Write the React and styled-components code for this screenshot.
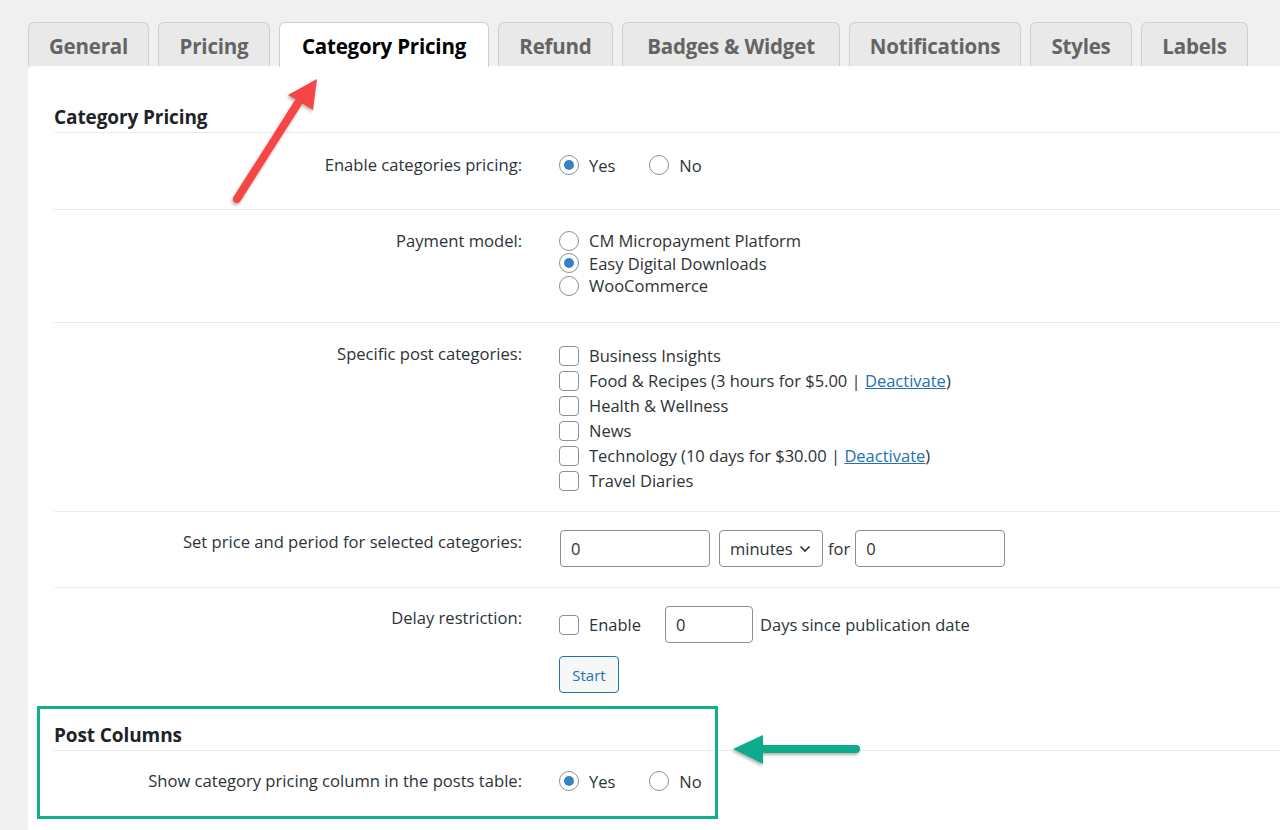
import React from 'react';
import styled, { createGlobalStyle } from 'styled-components';

const GlobalStyle = createGlobalStyle`
  body {
    margin: 0;
    background: #f0f0f1;
    font-family: "Open Sans", "Noto Sans", sans-serif;
    color: #3c434a;
    overflow: hidden;
  }
`;

const Page = styled.div`
  position: relative;
  box-sizing: border-box;
  padding: 22px 0 0 28px;
  height: 830px;
  overflow: hidden;
  display: flex;
  flex-direction: column;
`;

const TabBar = styled.div`
  display: flex;
  gap: 9px;
`;

const Tab = styled.div`
  width: ${(p) => p.$w}px;
  height: 44px;
  box-sizing: border-box;
  display: flex;
  align-items: center;
  justify-content: center;
  border: 1px solid #cfcfcf;
  border-bottom: none;
  border-radius: 6px 6px 0 0;
  background: ${(p) => (p.$active ? '#fff' : '#e9e9e9')};
  color: ${(p) => (p.$active ? '#000' : '#646464')};
  font-weight: 700;
  font-size: 20.5px;
  letter-spacing: -0.2px;
  padding-top: 2px;
  ${(p) => p.$active && 'margin-bottom: -1px; height: 45px; position: relative; z-index: 1;'}
`;

const Panel = styled.div`
  flex: 1;
  background: #fff;
  border-radius: 6px 0 0 0;
  padding: 39px 0 0 26px;
`;

const Heading = styled.h2`
  margin: 0;
  font-size: 19px;
  font-weight: 700;
  color: #1d2327;
  line-height: 24px;
  padding-bottom: 3px;
  border-bottom: 1px solid #ececec;
  letter-spacing: -0.1px;
`;

const Row = styled.div`
  display: grid;
  grid-template-columns: 468px 1fr;
  column-gap: 37px;
  padding: ${(p) => p.$pt ?? 20}px 0 ${(p) => p.$pb ?? 20}px;
  border-bottom: ${(p) => (p.$last ? 'none' : '1px solid #ececec')};
`;

const Label = styled.div`
  text-align: right;
  font-size: 16.6px;
  line-height: 22px;
  color: #2c3338;
  padding-top: ${(p) => p.$pt ?? 0}px;
`;

const Inline = styled.div`
  display: flex;
  align-items: center;
  gap: ${(p) => p.$gap ?? 0}px;
  font-size: 16.5px;
  color: #2c3338;
  min-height: ${(p) => p.$h ?? 22}px;
`;

const Stack = styled.div`
  display: flex;
  flex-direction: column;
`;

const Option = styled.label`
  display: flex;
  align-items: center;
  gap: 10px;
  height: ${(p) => p.$h ?? 22.5}px;
  font-size: 16.5px;
  color: #2c3338;
  margin-right: ${(p) => p.$mr ?? 0}px;
  white-space: nowrap;
`;

const Radio = styled.span`
  width: 20px;
  height: 20px;
  box-sizing: border-box;
  border-radius: 50%;
  border: 1px solid #8c8f94;
  display: inline-flex;
  align-items: center;
  justify-content: center;
  flex-shrink: 0;
  &::after {
    content: '';
    width: 10px;
    height: 10px;
    border-radius: 50%;
    background: ${(p) => (p.$on ? '#3582c4' : 'transparent')};
  }
`;

const Check = styled.span`
  width: 20px;
  height: 20px;
  box-sizing: border-box;
  border-radius: 4px;
  border: 1px solid #8c8f94;
  flex-shrink: 0;
`;

const Link = styled.a`
  color: #2271b1;
  text-decoration: underline;
`;

const Field = styled.div`
  width: ${(p) => p.$w}px;
  height: 37px;
  box-sizing: border-box;
  border: 1px solid #8c8f94;
  border-radius: 4px;
  padding: 0 10px;
  display: flex;
  align-items: center;
  justify-content: space-between;
  font-size: 16.5px;
  color: #2c3338;
  background: #fff;
  flex-shrink: 0;
`;

const Button = styled.div`
  width: 60px;
  height: 37px;
  box-sizing: border-box;
  border: 1px solid #2271b1;
  border-radius: 4px;
  background: #f6f7f7;
  color: #2271b1;
  font-size: 15px;
  display: flex;
  align-items: center;
  justify-content: center;
  margin-top: 13px;
`;

const Section = styled.div`
  margin-top: ${(p) => p.$mt ?? 0}px;
`;

const Overlay = styled.svg`
  position: absolute;
  left: 0;
  top: 0;
  pointer-events: none;
`;

const Chevron = () => (
  <svg width="14" height="14" viewBox="0 0 14 14">
    <path d="M2.5 4.5 L7 9 L11.5 4.5" fill="none" stroke="#2c3338" strokeWidth="1.7" />
  </svg>
);

const tabs = [
  ['General', 121],
  ['Pricing', 112],
  ['Category Pricing', 210, true],
  ['Refund', 115],
  ['Badges & Widget', 218],
  ['Notifications', 172],
  ['Styles', 102],
  ['Labels', 107],
];

const YesNo = () => (
  <Inline>
    <Option $mr={34}>
      <Radio $on /> Yes
    </Option>
    <Option>
      <Radio /> No
    </Option>
  </Inline>
);

const App = () => (
  <>
    <GlobalStyle />
    <Page>
      <TabBar>
        {tabs.map(([name, w, active]) => (
          <Tab key={name} $w={w} $active={active}>
            {name}
          </Tab>
        ))}
      </TabBar>
      <Panel>
        <Section>
          <Heading>Category Pricing</Heading>
          <Row $pt={21} $pb={32}>
            <Label>Enable categories pricing:</Label>
            <YesNo />
          </Row>
          <Row $pt={20} $pb={25}>
            <Label>Payment model:</Label>
            <Stack>
              <Option>
                <Radio /> CM Micropayment Platform
              </Option>
              <Option>
                <Radio $on /> Easy Digital Downloads
              </Option>
              <Option>
                <Radio /> WooCommerce
              </Option>
            </Stack>
          </Row>
          <Row $pt={20} $pb={18}>
            <Label>Specific post categories:</Label>
            <Stack>
              <Option $h={25}>
                <Check /> Business Insights
              </Option>
              <Option $h={25}>
                <Check />
                <span>
                  Food &amp; Recipes (3 hours for $5.00 | <Link>Deactivate</Link>)
                </span>
              </Option>
              <Option $h={25}>
                <Check /> Health &amp; Wellness
              </Option>
              <Option $h={25}>
                <Check /> News
              </Option>
              <Option $h={25}>
                <Check />
                <span>
                  Technology (10 days for $30.00 | <Link>Deactivate</Link>)
                </span>
              </Option>
              <Option $h={25}>
                <Check /> Travel Diaries
              </Option>
            </Stack>
          </Row>
          <Row $pt={18} $pb={20}>
            <Label $pt={1}>Set price and period for selected categories:</Label>
            <Inline $gap={5} style={{ marginLeft: 1 }}>
              <Field $w={150}>0</Field>
              <Field $w={104} style={{ marginLeft: 4 }}>
                minutes <Chevron />
              </Field>
              <span>for</span>
              <Field $w={150}>0</Field>
            </Inline>
          </Row>
          <Row $pt={18} $pb={12} $last>
            <Label $pt={1}>Delay restriction:</Label>
            <Stack>
              <Inline $h={37}>
                <Option $mr={24}>
                  <Check /> Enable
                </Option>
                <Field $w={88}>0</Field>
                <span style={{ marginLeft: 7 }}>Days since publication date</span>
              </Inline>
              <Button>Start</Button>
            </Stack>
          </Row>
        </Section>
        <Section $mt={18}>
          <Heading>Post Columns</Heading>
          <Row $pt={19} $pb={20} $last>
            <Label>Show category pricing column in the posts table:</Label>
            <YesNo />
          </Row>
        </Section>
      </Panel>
      <Overlay width="1280" height="830" viewBox="0 0 1280 830">
        <defs>
          <filter id="sh" x="-20%" y="-20%" width="140%" height="140%">
            <feDropShadow dx="-1" dy="2" stdDeviation="1.5" floodColor="#000" floodOpacity="0.3" />
          </filter>
        </defs>
        <rect x="38.5" y="707.5" width="678" height="110" fill="none" stroke="#10b08f" strokeWidth="3" />
        <g filter="url(#sh)">
          <line x1="237" y1="199" x2="298" y2="103" stroke="#f74545" strokeWidth="8" strokeLinecap="round" />
          <polygon points="317,79 288,95 313,110" fill="#f74545" />
        </g>
        <g filter="url(#sh)">
          <line x1="757" y1="749" x2="856" y2="749" stroke="#0bab8c" strokeWidth="8" strokeLinecap="round" />
          <polygon points="733,749 763,735 763,764" fill="#0bab8c" />
        </g>
      </Overlay>
    </Page>
  </>
);

export default App;
